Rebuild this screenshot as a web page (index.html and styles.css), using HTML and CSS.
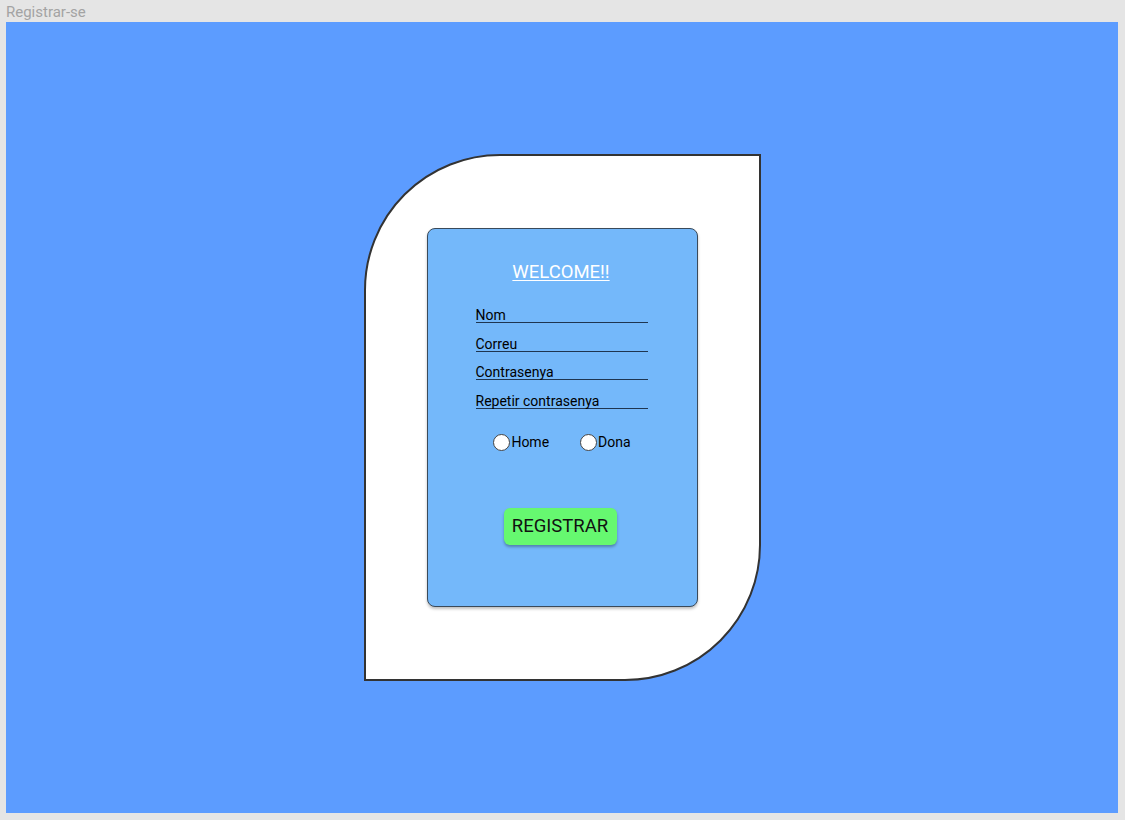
FILE: index.html
```html
<!DOCTYPE html>
<html>
<head>
<meta charset="utf-8">
<link rel="stylesheet" href="styles.css">
</head>
<body>
<div class="title">Registrar-se</div>
<div class="frame">
  <div class="leaf">
    <div class="card">
      <div class="welcome">WELCOME!!</div>
      <div class="fields">
        <div class="field">Nom</div>
        <div class="field">Correu</div>
        <div class="field">Contrasenya</div>
        <div class="field">Repetir contrasenya</div>
      </div>
      <div class="radios">
        <div class="radio"><span class="circle"></span>Home</div>
        <div class="radio"><span class="circle"></span>Dona</div>
      </div>
      <div class="btn">REGISTRAR</div>
    </div>
  </div>
</div>
</body>
</html>
```
FILE: styles.css
```css
html, body { margin: 0; padding: 0; }
body {
  background: #e5e5e5;
  width: 1125px;
  height: 820px;
  font-family: Roboto, "Liberation Sans", sans-serif;
  overflow: hidden;
}
.title {
  height: 22px;
  padding-left: 6px;
  font-size: 15px;
  line-height: 24px;
  color: #a3a3a3;
  font-family: Roboto, sans-serif;
}
.frame {
  margin-left: 6px;
  width: 1112px;
  height: 791px;
  background: #5c9cff;
  display: flex;
  align-items: center;
  justify-content: center;
}
.leaf {
  box-sizing: border-box;
  width: 397px;
  height: 527px;
  background: #fff;
  border: 2px solid #333;
  border-radius: 136px 0 136px 0;
  display: flex;
  align-items: center;
  justify-content: center;
}
.card {
  box-sizing: border-box;
  width: 271px;
  height: 379px;
  background: #74b8fa;
  border: 1px solid #3a4a5a;
  border-radius: 8px;
  box-shadow: 0 2px 3px rgba(0,0,0,0.25);
  display: flex;
  flex-direction: column;
  align-items: center;
  padding-top: 32px;
}
.welcome {
  color: #fff;
  font-size: 18.5px;
  text-decoration: underline;
  text-underline-offset: 2px;
  text-decoration-thickness: 1px;
  line-height: 22px;
  margin-left: -2px;
}
.fields {
  margin-top: 24px;
  width: 172px;
  margin-left: -1px;
  display: flex;
  flex-direction: column;
  gap: 12.6px;
}
.field {
  font-size: 14px;
  color: #000;
  line-height: 16px;
  height: 15px;
  border-bottom: 1.5px solid #1e3550;
}
.radios {
  margin-top: 25px;
  display: flex;
  gap: 31px;
  margin-left: 0px;
}
.radio {
  display: flex;
  align-items: center;
  font-size: 14px;
  color: #000;
}
.circle {
  box-sizing: border-box;
  width: 17px;
  height: 17px;
  border-radius: 50%;
  background: #fff;
  border: 1px solid #444;
  margin-right: 1px;
}
.btn {
  margin-top: 57px;
  margin-left: -4px;
  width: 113px;
  height: 37px;
  background: #66f870;
  border-radius: 6px;
  box-shadow: 0 2px 3px rgba(0,0,0,0.3);
  display: flex;
  align-items: center;
  justify-content: center;
  font-size: 18.5px;
  color: #111;
}
```
